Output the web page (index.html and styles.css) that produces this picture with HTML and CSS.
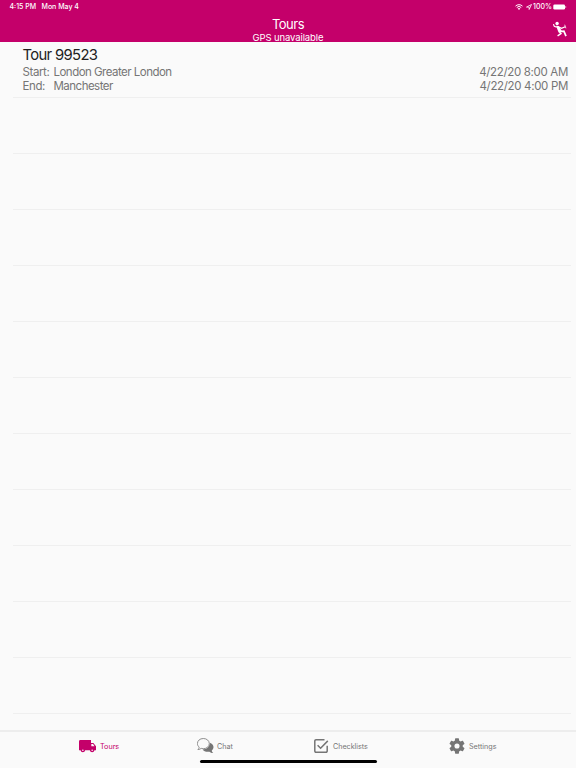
FILE: index.html
```html
<!DOCTYPE html>
<html lang="en">
<head>
    <meta charset="UTF-8">
    <meta name="viewport" content="width=device-width, initial-scale=1.0">
    <title>Tours</title>
    <link rel="stylesheet" href="styles.css">
</head>
<body>
    <header class="header">
        <!-- Status bar -->
        <div class="status-bar">
            <span class="time">4:15 PM</span>
            <span class="date">Mon May 4</span>
            <svg class="wifi" viewBox="0 0 16 12" width="8" height="6">
                <path d="M1 4.2a10 10 0 0 1 14 0M3.5 7a6.3 6.3 0 0 1 9 0" fill="none" stroke="#fff" stroke-width="2"/>
                <path d="M8 12L5.3 9.2a3.8 3.8 0 0 1 5.4 0z" fill="#fff"/>
            </svg>
            <svg class="location" viewBox="0 0 12 12" width="6" height="6">
                <path d="M1 6.2L11 1 6.3 11V6.2z" fill="none" stroke="#fff" stroke-width="1.6"/>
            </svg>
            <span class="battery-level">100%</span>
            <svg class="battery" viewBox="0 0 14 6" width="14" height="6">
                <rect x=".3" y=".5" width="11.7" height="5" rx="1.3" fill="#fff"/>
                <path d="M12.7 2.2v1.6" stroke="#fff" stroke-width=".7"/>
            </svg>
        </div>

        <div class="nav-bar">
            <div class="title">
                <h1>Tours</h1>
                <p>GPS unavailable</p>
            </div>
            <svg class="driver-icon" viewBox="0 0 14 16" width="14" height="16">
                <circle cx="4.1" cy="2.5" r="1.7" fill="#fff"/>
                <path d="M3 4.8L5.8 5 9 10.3 5.6 11.6z" fill="#fff"/>
                <path d="M.4 3.2L1.3 5.3 3.8 6.2M5.2 5.9L8.6 7.4 12.2 5.8" fill="none" stroke="#fff" stroke-width="1.2"/>
                <path d="M6.4 10.7L10.9 10.2 13 15.2" fill="none" stroke="#fff" stroke-width="1.7"/>
                <path d="M6.4 10.9L8 12.7 4.6 14.9" fill="none" stroke="#fff" stroke-width="1.4"/>
                <path d="M11.7 3.7L12.9 7.3" stroke="#fff" stroke-width=".8"/>
            </svg>
        </div>
    </header>

    <main class="tour-list">
        <div class="row tour">
            <h2>Tour 99523</h2>
            <div class="stop">
                <span class="label">Start:</span>
                <span class="place">London Greater London</span>
                <span class="stop-time">4/22/20 8:00 AM</span>
            </div>
            <div class="stop">
                <span class="label">End:</span>
                <span class="place">Manchester</span>
                <span class="stop-time">4/22/20 4:00 PM</span>
            </div>
        </div>
        <div class="row"></div>
        <div class="row"></div>
        <div class="row"></div>
        <div class="row"></div>
        <div class="row"></div>
        <div class="row"></div>
        <div class="row"></div>
        <div class="row"></div>
        <div class="row"></div>
        <div class="row"></div>
        <div class="row"></div>
    </main>

    <!-- Bottom tabs -->
    <footer class="footer">
        <nav class="tab-bar">
            <a class="tab tab-tours active">
                <svg viewBox="0 0 17 13" width="17" height="13">
                    <path fill="currentColor" d="M1.4 0H12v3h2.4L17 6.3v4h-1.5a2.4 2.4 0 0 1-4.7 0H6.2a2.4 2.4 0 0 1-4.7 0H0V1.4A1.4 1.4 0 0 1 1.4 0z"/>
                    <path fill="#fafafa" d="M12.3 4.1H14l1.5 2.1h-3.2z"/>
                    <circle cx="3.85" cy="10.3" r=".8" fill="#fafafa"/>
                    <circle cx="13.15" cy="10.3" r=".8" fill="#fafafa"/>
                </svg>
                <span>Tours</span>
            </a>
            <a class="tab tab-chat">
                <svg viewBox="0 0 17 16" width="17" height="16">
                    <path fill="currentColor" d="M12.8 4.8c2.3.7 3.7 2.4 3.7 4.3 0 1.4-.7 2.5-1.7 3.4 0 1 .5 1.8 1.5 2.6-1.5.1-2.8-.4-3.8-1.4-3 .6-5.7-.4-6.9-2.2 3.8 0 7.2-2.6 7.2-6.7z"/>
                    <path fill="#fafafa" stroke="currentColor" stroke-width=".8" d="M6.3.5c3.4 0 6 2.2 6 5.1s-2.6 5.1-6 5.1c-.8 0-1.5-.1-2.1-.3-.9.8-2 1.2-3.3 1.1.9-.7 1.3-1.5 1.3-2.4C1.1 8.2.4 7 .4 5.6.4 2.7 2.9.5 6.3.5z"/>
                </svg>
                <span>Chat</span>
            </a>
            <a class="tab tab-checklists">
                <svg viewBox="0 0 15 14" width="15" height="14">
                    <path fill="none" stroke="currentColor" stroke-width="1.5" d="M10.5.8H2A1.2 1.2 0 0 0 .8 2v10A1.2 1.2 0 0 0 2 13.2h10a1.2 1.2 0 0 0 1.2-1.2V6.7M3.6 6.2l3 3L13.8 1.9"/>
                </svg>
                <span>Checklists</span>
            </a>
            <a class="tab tab-settings">
                <svg viewBox="2 2 20 20" width="16" height="16">
                    <path fill="currentColor" d="M19.14 12.94c.04-.3.06-.61.06-.94 0-.32-.02-.64-.07-.94l2.03-1.58a.49.49 0 0 0 .12-.61l-1.92-3.32a.49.49 0 0 0-.59-.22l-2.39.96a7 7 0 0 0-1.62-.94l-.36-2.54a.48.48 0 0 0-.48-.41h-3.84a.48.48 0 0 0-.47.41l-.36 2.54c-.59.24-1.13.57-1.62.94l-2.39-.96a.48.48 0 0 0-.59.22L2.74 8.87a.48.48 0 0 0 .12.61l2.03 1.58c-.05.3-.09.63-.09.94s.02.64.07.94l-2.03 1.58a.49.49 0 0 0-.12.61l1.92 3.32c.12.22.37.29.59.22l2.39-.96c.5.38 1.03.7 1.62.94l.36 2.54c.05.24.24.41.48.41h3.84c.24 0 .44-.17.47-.41l.36-2.54a7 7 0 0 0 1.62-.94l2.39.96c.22.08.47 0 .59-.22l1.92-3.32a.48.48 0 0 0-.12-.61zM12 15.2a3.2 3.2 0 1 1 0-6.4 3.2 3.2 0 0 1 0 6.4z"/>
                </svg>
                <span>Settings</span>
            </a>
        </nav>
        <div class="home-indicator"></div>
    </footer>
</body>
</html>
```
FILE: styles.css
```css
* {
    box-sizing: border-box;
}

body {
    display: flex;
    flex-direction: column;
    height: 100vh;
    margin: 0;
    overflow: hidden;
    background-color: #fafafa;
    font-family: Inter, sans-serif;
    color: #212121;
}

h1, h2, p {
    margin: 0;
    font-weight: 400;
}

svg {
    display: block;
    flex: none;
}

.header {
    height: 42px;
    flex: none;
    background-color: #c4006a;
    color: white;
    overflow: hidden;
}

.status-bar {
    display: flex;
    align-items: center;
    height: 14px;
    padding: 0 9px 0 9.5px;
    font-size: 7px;
    font-weight: 500;
    line-height: 14px;
    white-space: nowrap;
}

.time {
    width: 32px;
}

.wifi {
    margin-left: auto;
    margin-right: 3px;
}

.battery-level {
    margin: 0 1px 0 1px;
}

.nav-bar {
    display: grid;
    grid-template-columns: 1fr auto 1fr;
    padding: 2px 9px 0 9px;
}

.title {
    grid-column: 2;
    text-align: center;
}

.title h1 {
    font-size: 13px;
    line-height: 16px;
    letter-spacing: -0.5px;
}

.title p {
    font-size: 9.5px;
    line-height: 11px;
    letter-spacing: -0.12px;
}

.driver-icon {
    grid-column: 3;
    justify-self: end;
    margin-top: 5px;
}

.tour-list {
    flex: 1;
    min-height: 0;
    overflow: hidden;
    padding: 0 5px 0 13px;
}

.row {
    height: 56px;
    border-bottom: 1px solid #efefef;
}

.tour {
    padding: 4px 3px 0 9.5px;
}

.tour h2 {
    font-size: 14.8px;
    line-height: 19px;
    letter-spacing: -0.65px;
}

.stop {
    display: flex;
    font-size: 11.5px;
    line-height: 14px;
    letter-spacing: -0.52px;
    color: #757575;
}

.label {
    width: 31px;
    letter-spacing: -0.4px;
}

.stop-time {
    margin-left: auto;
    letter-spacing: -0.33px;
}

.footer {
    height: 38px;
    flex: none;
    border-top: 2px solid #ededed;
}

.tab-bar {
    display: flex;
    height: 28px;
    padding-left: 79px;
}

.tab {
    display: flex;
    align-items: center;
    gap: 4px;
    font-size: 7.2px;
    color: #757575;
}

.tab-tours {
    width: 118px;
}

.tab-chat {
    width: 117px;
    gap: 3px;
}

.tab-checklists {
    width: 135px;
    letter-spacing: -0.03px;
}

.active {
    color: #c4006a;
}

.home-indicator {
    width: 177px;
    height: 3px;
    margin: 0 auto;
    border-radius: 2px;
    background-color: black;
}
```
